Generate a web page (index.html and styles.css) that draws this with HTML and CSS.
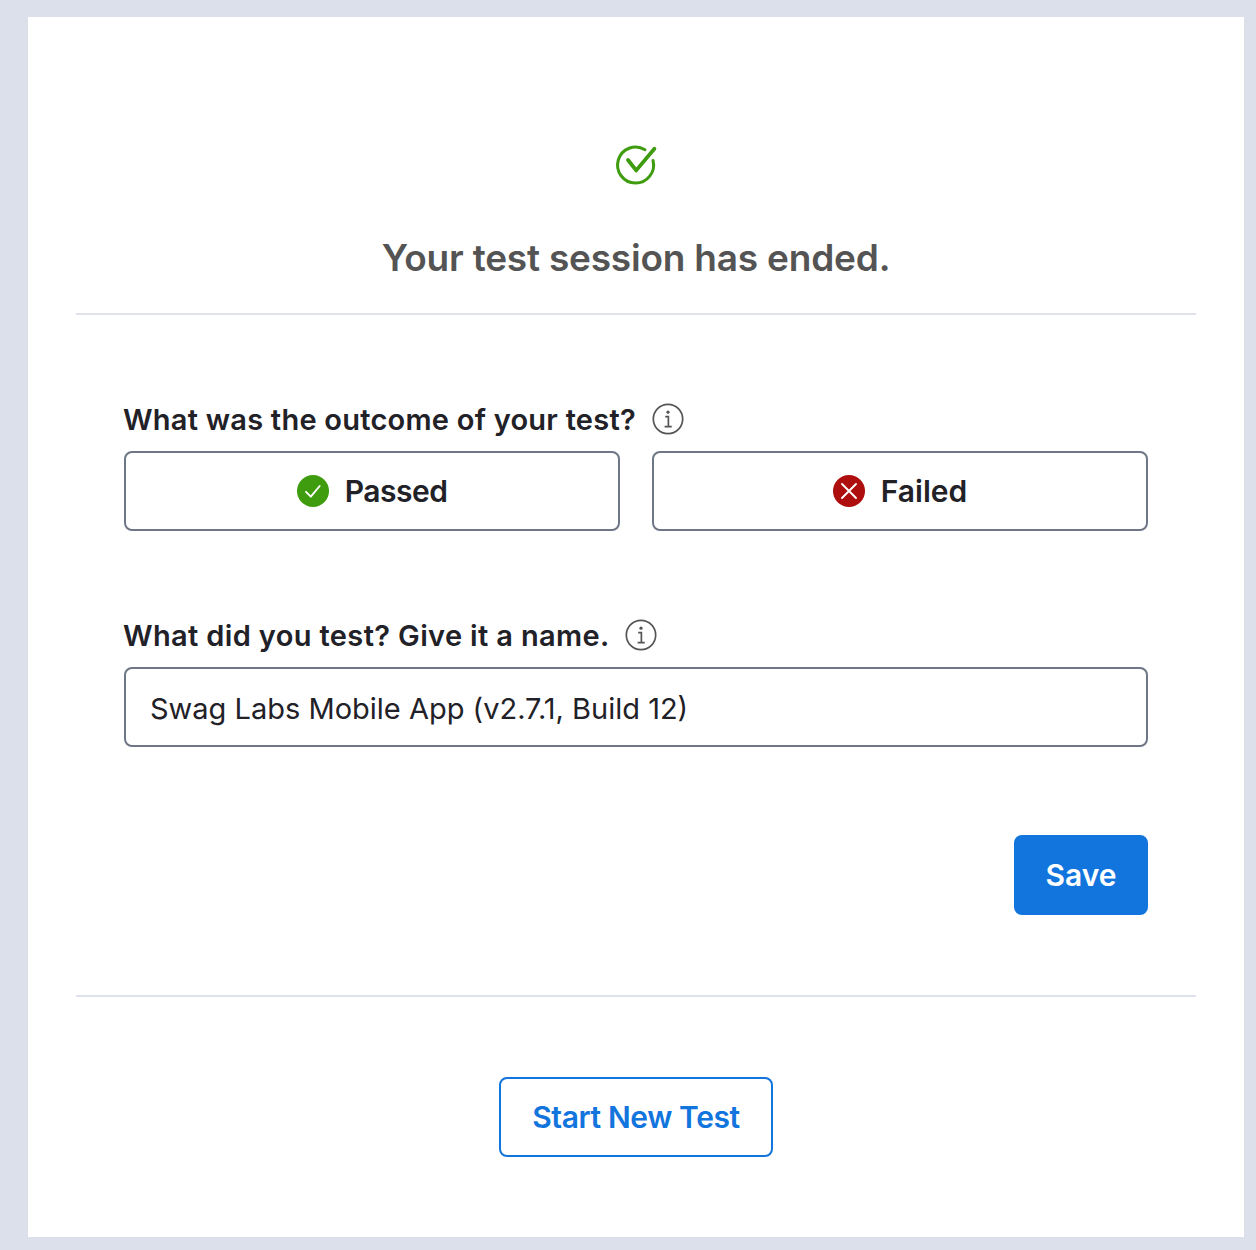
FILE: index.html
```html
<!DOCTYPE html>
<html lang="en">
<head>
<meta charset="utf-8">
<title>Your test session has ended</title>
<link rel="stylesheet" href="styles.css">
</head>
<body>
<main class="card">
  <header class="head">
    <svg class="head-icon" width="40" height="40" viewBox="0 0 40 40" fill="none">
      <path d="M29 4.7A18 18 0 1 0 37 15.5" stroke="#3f9c0f" stroke-width="3" stroke-linecap="round"/>
      <path d="M12 15l8.2 10.4L38.4 3.8" stroke="#3f9c0f" stroke-width="3.8" stroke-linecap="round" stroke-linejoin="round"/>
    </svg>
    <h1 class="title">Your test session has ended.</h1>
  </header>
  <section class="form">
    <div class="label-row">
      <span class="label">What was the outcome of your test?</span>
      <svg class="info" width="32" height="32" viewBox="0 0 34 34" fill="none"><circle cx="17" cy="17" r="15.6" stroke="#555" stroke-width="1.8"/><circle cx="17" cy="9.8" r="1.7" fill="#555"/><path d="M14 14.4h3.4v10.4M13.4 25h7.6" stroke="#555" stroke-width="1.8"/></svg>
    </div>
    <div class="choices">
      <button class="choice" type="button">
        <svg width="32" height="32" viewBox="0 0 32 32"><circle cx="16" cy="16" r="16" fill="#3f9c0f"/><path d="M9 16.8l4.8 4.8 8.9-10.6" fill="none" stroke="#fff" stroke-width="1.9" stroke-linecap="round" stroke-linejoin="round"/></svg>
        <span class="tight">Passed</span>
      </button>
      <button class="choice" type="button">
        <svg width="32" height="32" viewBox="0 0 32 32"><circle cx="16" cy="16" r="16" fill="#ae0e0e"/><path d="M9 9l14 14M23 9L9 23" fill="none" stroke="#fff" stroke-width="1.9" stroke-linecap="round"/></svg>
        <span>Failed</span>
      </button>
    </div>
    <div class="label-row second">
      <span class="label wide">What did you test? Give it a name.</span>
      <svg class="info" width="32" height="32" viewBox="0 0 34 34" fill="none"><circle cx="17" cy="17" r="15.6" stroke="#555" stroke-width="1.8"/><circle cx="17" cy="9.8" r="1.7" fill="#555"/><path d="M14 14.4h3.4v10.4M13.4 25h7.6" stroke="#555" stroke-width="1.8"/></svg>
    </div>
    <input class="name" type="text" value="Swag Labs Mobile App (v2.7.1, Build 12)">
    <div class="actions"><button class="save" type="button">Save</button></div>
  </section>
  <footer class="foot"><button class="start" type="button">Start New Test</button></footer>
</main>
</body>
</html>
```
FILE: styles.css
```css
* { box-sizing: border-box; }
html, body { margin: 0; height: 100%; }
body {
  background: #dce0eb;
  padding: 17px 12px 13px 28px;
  font-family: "Inter", "Liberation Sans", sans-serif;
  color: #212127;
}
.card {
  background: #fff;
  height: 1220px;
  padding: 0 48px;
  display: flex;
  flex-direction: column;
}
.head {
  height: 298px;
  border-bottom: 2px solid #dfe1eb;
  display: flex;
  flex-direction: column;
  align-items: center;
  padding-top: 128px;
}
.head-icon { display: block; overflow: visible; }
.title {
  margin: 51px 0 0;
  font-size: 37px;
  line-height: 44px;
  font-weight: 600;
  color: #545454;
  letter-spacing: -0.2px;
}
.form { padding: 84px 48px 0; height: 682px; border-bottom: 2px solid #dfe1eb; }
.label-row { display: flex; align-items: center; height: 40px; gap: 16px; }
.label { font-size: 29px; font-weight: 600; letter-spacing: 0.24px; margin-left: -1px; }
.wide { letter-spacing: 0.36px; }
.second { margin-top: 84px; gap: 15px; }
.choices { display: flex; gap: 32px; margin-top: 12px; }
.choice {
  flex: 1;
  height: 80px;
  background: #fff;
  border: 2px solid #6e7687;
  border-radius: 8px;
  display: flex;
  align-items: center;
  justify-content: center;
  gap: 16px;
  font: 600 30px "Inter", "Liberation Sans", sans-serif;
  color: #212127;
  padding: 0;
}
.tight { letter-spacing: -0.5px; }
.name {
  display: block;
  width: 100%;
  height: 80px;
  margin-top: 12px;
  border: 2px solid #6e7687;
  border-radius: 8px;
  padding: 2px 24px 0;
  font: 400 29px "Inter", "Liberation Sans", sans-serif;
  color: #212127;
  background: #fff;
}
.actions { display: flex; justify-content: flex-end; margin-top: 88px; }
.save {
  width: 134px;
  height: 80px;
  border: 0;
  border-radius: 8px;
  background: #1274dd;
  color: #fff;
  font: 600 30px "Inter", "Liberation Sans", sans-serif;
}
.foot { display: flex; justify-content: center; padding-top: 80px; }
.start {
  width: 274px;
  height: 80px;
  background: #fff;
  border: 2px solid #1274dd;
  border-radius: 8px;
  color: #1274dd;
  font: 600 30px "Inter", "Liberation Sans", sans-serif;
  letter-spacing: -0.4px;
}
```
